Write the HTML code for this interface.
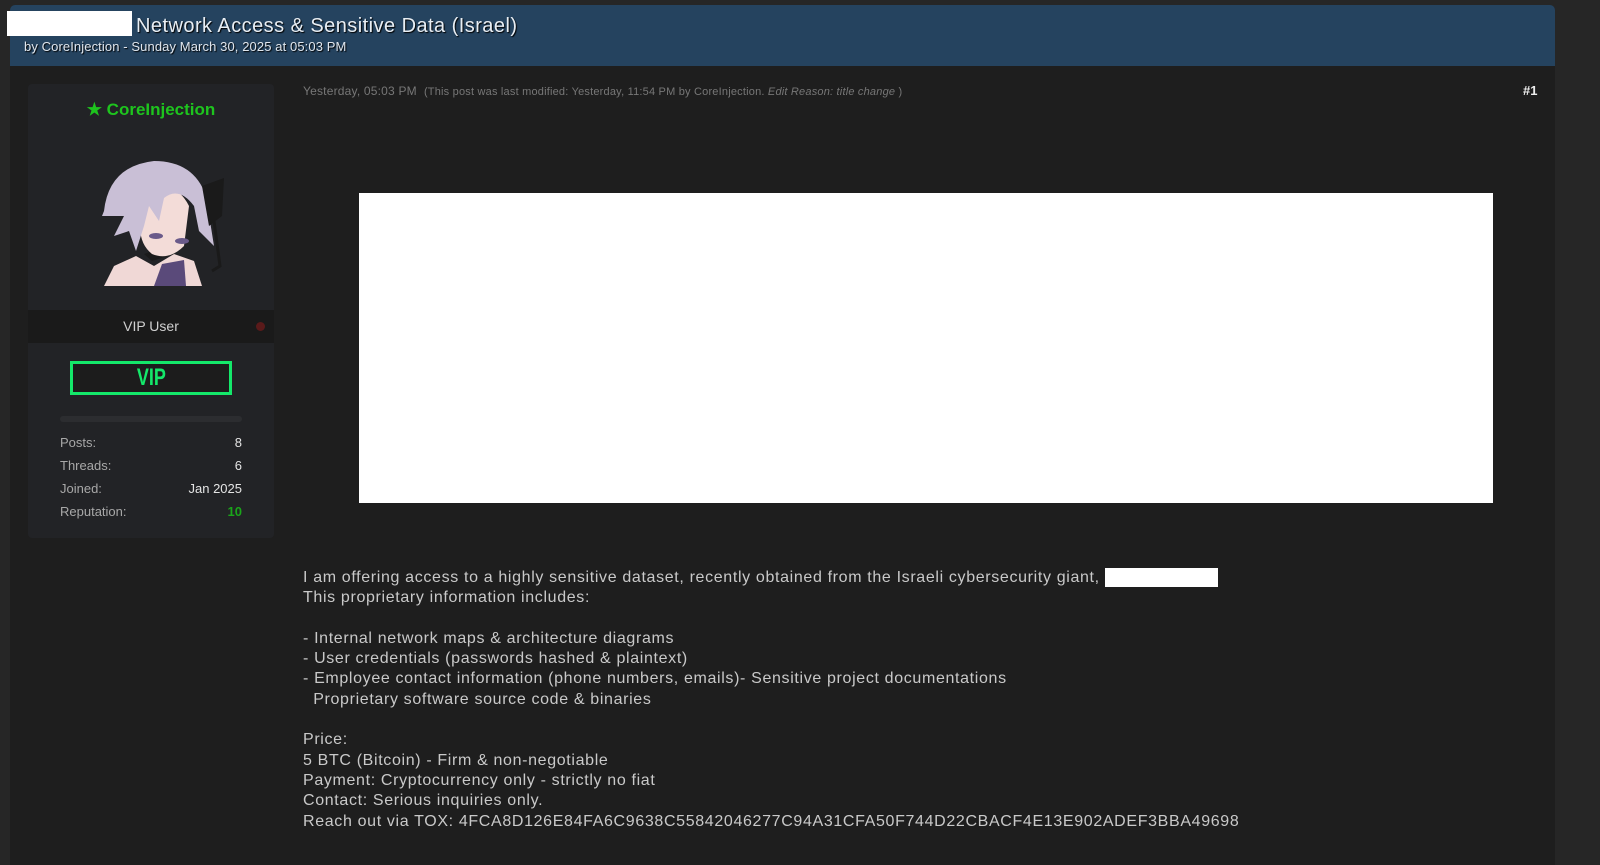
<!DOCTYPE html>
<html><head><meta charset="utf-8"><style>
*{margin:0;padding:0;box-sizing:border-box}
body{width:1600px;height:853px;background:#262626;font-family:"Liberation Sans",sans-serif;overflow:hidden;position:relative}
.frame{position:absolute;left:10px;top:5px;width:1545px;height:860px;background:#1e1e1e;border-radius:5px 5px 0 0}
.hdr{position:absolute;left:0;top:0;width:1545px;height:61px;background:#25435f;border-radius:5px 5px 0 0}
.title{position:absolute;left:136px;top:15px;font-size:20px;color:#e8eef4;text-shadow:1px 1px 1px #000;letter-spacing:0.45px}
.redact{position:absolute;background:#fff}
.by{position:absolute;font-size:13px;color:#dfe6ee;text-shadow:1px 1px 1px #000;letter-spacing:0.1px}
.side{position:absolute;left:28px;top:84px;width:246px;height:454px;background:#222326;border-radius:4px}
.name{position:absolute;left:0;width:246px;top:16px;text-align:center;color:#1ec41e;font-weight:bold;font-size:17px}
.role{position:absolute;left:0;top:226px;width:246px;height:33px;background:#1a1a1a;color:#d0d0d0;font-size:14px;text-align:center;line-height:33px}
.dot{position:absolute;right:9px;top:12px;width:9px;height:9px;border-radius:50%;background:#5a1a1a}
.vip{position:absolute;left:42px;top:277px;width:162px;height:34px;border:3px solid #14e86a;background:#1c1c1c;color:#14e86a;font-weight:bold;font-size:24px;text-align:center;line-height:28px}
.vip span{display:inline-block;transform:scaleX(0.75)}
.bar{position:absolute;left:32px;top:332px;width:182px;height:6px;border-radius:3px;background:#2c2d30}
.stat{position:absolute;left:32px;width:182px;font-size:13px;color:#a8a8a8}
.stat b{position:absolute;right:0;font-weight:normal;color:#e4e4e4}
.meta{position:absolute;left:303px;top:84px;font-size:12px;color:#777;letter-spacing:0.2px}
.meta span{font-size:11px;color:#777}
.num{position:absolute;left:1523px;top:83px;font-size:13px;font-weight:bold;color:#eee}
.body{position:absolute;left:303px;top:568px;font-size:16px;line-height:20.3px;color:#c9c9c9;white-space:pre;letter-spacing:0.65px}
</style></head><body>
<div class="frame">
 <div class="hdr"></div>
</div>
<div class="title">Network Access &amp; Sensitive Data (Israel)</div>
<div class="redact" style="left:7px;top:11px;width:125px;height:25px"></div>
<div class="by" style="left:24px;top:39px">by CoreInjection - Sunday March 30, 2025 at 05:03 PM</div>
<div class="side">
 <div class="name">★ CoreInjection</div>
 <svg style="position:absolute;left:46px;top:52px" width="160" height="152" viewBox="0 0 160 152">
  <path d="M30 150 L40 130 L62 120 L80 130 L100 118 L120 125 L128 150 Z" fill="#f0d8d6"/>
  <path d="M80 150 L88 128 L110 124 L112 150Z" fill="#5a4a7a"/>
  <path d="M95 110 L100 118 L78 125 L70 118Z" fill="#1a1a1a"/>
  <path d="M70 60 Q100 40 115 70 L110 110 Q95 125 78 118 Q62 105 68 80Z" fill="#f3dcd8"/>
  <path d="M30 75 Q35 30 80 25 Q120 25 132 60 L140 110 L125 95 L120 70 Q105 50 90 62 L85 85 L75 70 L70 90 L62 115 L55 95 L40 100 L50 80 L28 80 Z" fill="#c9bfd6"/>
  <path d="M128 50 L150 42 L148 80 L135 90 Z" fill="#1a1a1a"/>
  <path d="M140 85 L146 130 L138 135" stroke="#1a1a1a" stroke-width="3" fill="none"/>
  <ellipse cx="82" cy="100" rx="7" ry="3" fill="#6a5a8a"/><ellipse cx="108" cy="105" rx="7" ry="3" fill="#6a5a8a"/>
 </svg>
 <div class="role">VIP User<div class="dot"></div></div>
 <div class="vip"><span>VIP</span></div>
 <div class="bar"></div>
 <div class="stat" style="top:351px">Posts:<b>8</b></div>
 <div class="stat" style="top:374px">Threads:<b>6</b></div>
 <div class="stat" style="top:397px">Joined:<b>Jan 2025</b></div>
 <div class="stat" style="top:420px">Reputation:<b style="color:#1aa51a;font-weight:bold">10</b></div>
</div>
<div class="meta">Yesterday, 05:03 PM &nbsp;<span>(This post was last modified: Yesterday, 11:54 PM by CoreInjection. <i>Edit Reason: title change</i> )</span></div>
<div class="num">#1</div>
<div class="redact" style="left:359px;top:193px;width:1134px;height:310px"></div>
<div class="body">I am offering access to a highly sensitive dataset, recently obtained from the Israeli cybersecurity giant, 
This proprietary information includes:

- Internal network maps &amp; architecture diagrams
- User credentials (passwords hashed &amp; plaintext)
- Employee contact information (phone numbers, emails)- Sensitive project documentations
  Proprietary software source code &amp; binaries

Price:
5 BTC (Bitcoin) - Firm &amp; non-negotiable
Payment: Cryptocurrency only - strictly no fiat
Contact: Serious inquiries only.
Reach out via TOX: 4FCA8D126E84FA6C9638C55842046277C94A31CFA50F744D22CBACF4E13E902ADEF3BBA49698</div>
<div class="redact" style="left:1105px;top:568px;width:113px;height:19px"></div>
</body></html>
